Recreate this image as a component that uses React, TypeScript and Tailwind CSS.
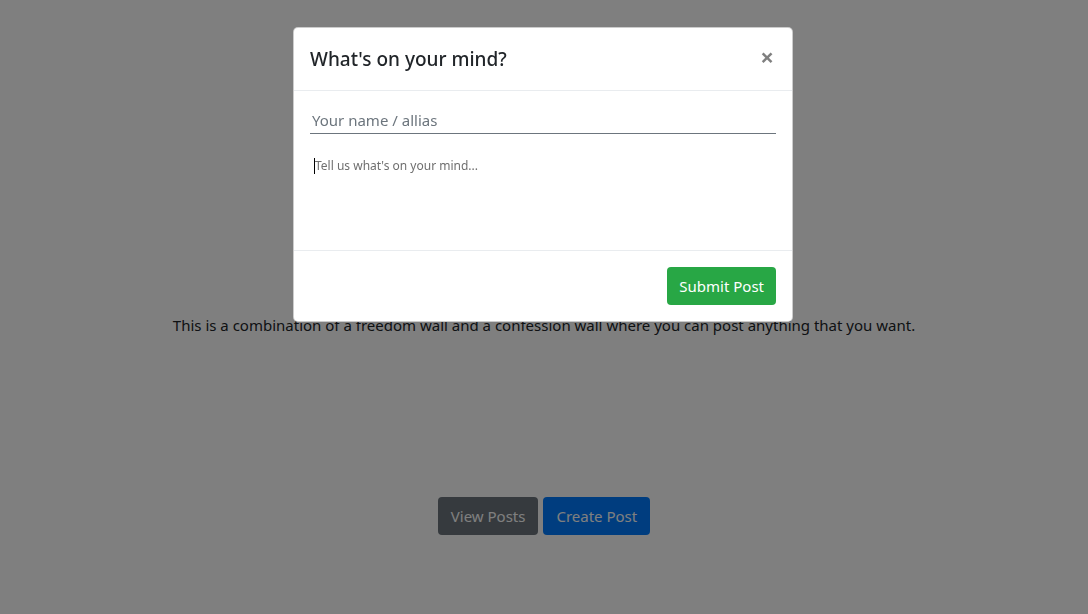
import React from "react";

export default function App() {
  return (
    <div className="relative min-h-[614px] bg-white font-['Noto_Sans',sans-serif] text-[#212529]">
      <div className="flex flex-col items-center pt-[313px]">
        <p className="text-[15px] leading-6">
          This is a combination of a freedom wall and a confession wall where you can post anything that you want.
        </p>
        <div className="mt-[160px] flex gap-[5px]">
          <button className="h-[38px] rounded px-[13px] text-[15px] text-white bg-[#6c757d]">View Posts</button>
          <button className="h-[38px] rounded px-[13px] text-[15px] text-white bg-[#007bff]">Create Post</button>
        </div>
      </div>

      {/* modal */}
      <div className="fixed inset-0 bg-black/50">
        <div className="ml-[293px] mt-[27px] w-[500px] rounded-[5px] border border-black/20 bg-white">
          <div className="flex items-start justify-between border-b border-[#e9ecef] p-4">
            <h5 className="text-[19px] font-medium leading-[30px] text-[#212529]">What's on your mind?</h5>
            <button className="-mt-[2px] mr-[2px] text-2xl font-bold leading-[30px] text-black/50">×</button>
          </div>
          <div className="p-4">
            <input
              className="block h-[27px] w-full border-b border-[#6c757d] pl-[2px] text-[15px] text-[#212529] outline-none placeholder:text-[#6c757d]"
              placeholder="Your name / allias"
            />
            <div className="relative mt-[20px]">
              {/* text caret */}
              <span className="absolute left-[4px] top-[4px] h-[16px] w-px bg-black" />
              <textarea
                className="block h-[80px] w-full resize-none pl-[5px] pt-[4px] text-[12px] leading-4 outline-none placeholder:text-[#6f6f6f]"
                placeholder="Tell us what's on your mind..."
              />
            </div>
          </div>
          <div className="flex justify-end border-t border-[#e9ecef] p-4">
            <button className="h-[38px] rounded px-3 text-[15px] text-white bg-[#28a745]">Submit Post</button>
          </div>
        </div>
      </div>
    </div>
  );
}
